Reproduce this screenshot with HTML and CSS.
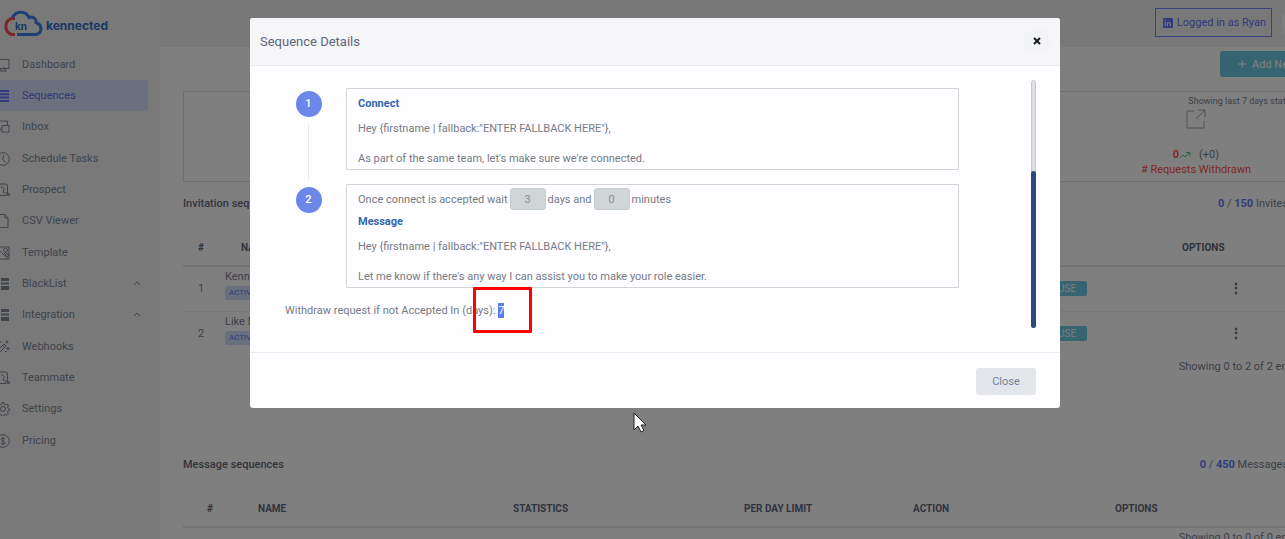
FILE: index.html
```html
<!DOCTYPE html>
<html lang="en">
<head>
    <meta charset="UTF-8">
    <meta name="viewport" content="width=device-width, initial-scale=1.0">
    <title>Kennected - Sequences</title>
    <link rel="stylesheet" href="styles.css">
</head>
<body>
    <div class="layout">
        <aside class="sidebar">
            <a href="#" class="logo">
                <svg class="logo-cloud" viewBox="0 0 42 28" fill="none" stroke-width="3">
                    <path d="M14 9.500H10.500A8.500 8.500 0 0 0 10.500 25.500H14" stroke="#ff4a50"/>
                    <path d="M11.500 9A9 9 0 0 1 28 8.500C32 7 35.500 10 35 13.500C42 16 41.500 25.500 34 25.500H16" stroke="#3a80e8"/>
                    <text x="14" y="21" class="logo-kn">kn</text>
                </svg>
                <span>kennected</span>
            </a>
            <nav>
                <ul class="menu">
                    <li><a href="#"><svg class="icon" viewBox="0 0 14 14"><path d="M1 1.500h12v9H1zM5 10.500v2.500M9 10.500v2.500M3 13h8M8 9v1.500"/></svg>Dashboard</a></li>
                    <li class="active"><a href="#"><svg class="icon" viewBox="0 0 14 14"><path d="M0 2h13M0 5.300h13M0 8.600h13M0 12h13" stroke-width="2"/></svg>Sequences</a></li>
                    <li><a href="#"><svg class="icon" viewBox="0 0 14 14"><path d="M11.500 5V1H1v8h4M6 5.500h7v6.500h-1v1l-1.500-1H6zM3 9v2l2-1.500"/></svg>Inbox</a></li>
                    <li><a href="#"><svg class="icon" viewBox="0 0 14 14"><circle cx="7" cy="7" r="6.300"/><path d="M8 3L6.500 7 9.500 10.500"/></svg>Schedule Tasks</a></li>
                    <li><a href="#"><svg class="icon" viewBox="0 0 14 14"><path d="M3 1h6.500a2 2 0 0 1 2 2v5.500L10 10M5 4a2.500 2.500 0 0 1 3 3l-1 2 3 2v1.500H1V11l3-2M11.500 8.500v4h2v-2h-2"/></svg>Prospect</a></li>
                    <li><a href="#"><svg class="icon" viewBox="0 0 14 14"><path d="M1.500 .5h7.500L12 4v9.500H1.500zM9 .5V4h3"/></svg>CSV Viewer</a></li>
                    <li><a href="#"><svg class="icon" viewBox="0 0 14 14"><path d="M1 1h12v12H1zM1 7l3-2 8 7.500M7 9l3-3"/><circle cx="9.500" cy="4" r="2"/><circle cx="11" cy="9" r="1.500"/></svg>Template</a></li>
                    <li><a href="#"><svg class="icon solid" viewBox="0 0 14 14"><path d="M0 1h4v3H0zM5 1h8v3H5zM0 5.500h4v2H0zM5 5.500h8v2H5zM0 9h4v4H0zM5 9h8v4H5z"/></svg>BlackList<svg class="chevron" viewBox="0 0 8 5"><path d="M1 4l3-3 3 3"/></svg></a></li>
                    <li><a href="#"><svg class="icon solid" viewBox="0 0 14 14"><path d="M0 1h4v3H0zM5 1h8v3H5zM0 5.500h4v2H0zM5 5.500h8v2H5zM0 9h4v4H0zM5 9h8v4H5z"/></svg>Integration<svg class="chevron" viewBox="0 0 8 5"><path d="M1 4l3-3 3 3"/></svg></a></li>
                    <li><a href="#"><svg class="icon" viewBox="0 0 14 14"><path d="M1 11l7-7 2 2-7 7zM6.500 5.500l2 2M11 .5v3M9.500 2h3M12 7v3M10.500 8.500h3M4 1v2M3 2h2M9 11.500h2"/></svg>Webhooks</a></li>
                    <li><a href="#"><svg class="icon" viewBox="0 0 14 14"><path d="M3 1h6.500a2 2 0 0 1 2 2v5.500L10 10M5 4a2.500 2.500 0 0 1 3 3l-1 2 3 2v1.500H1V11l3-2M11.500 8.500v4h2v-2h-2"/></svg>Teammate</a></li>
                    <li><a href="#"><svg class="icon" viewBox="0 0 14 14"><circle cx="7" cy="7" r="2.500"/><path d="M6 .7h2l.4 1.900 1.200.5 1.600-1 1.400 1.400-1 1.600.5 1.200 1.400.4v2l-1.500.4-.5 1.200 1 1.600-1.400 1.400-1.600-1-1.100.5-.4 1.500H6l-.4-1.500-1.200-.5-1.600 1-1.400-1.400 1-1.600-.5-1.200L.5 8.500v-2l1.500-.4.5-1.200-1-1.600 1.400-1.400 1.600 1 1.100-.5z"/></svg>Settings</a></li>
                    <li><a href="#"><svg class="icon" viewBox="0 0 14 14"><circle cx="7" cy="7" r="6.300"/><path d="M9.300 5C9 3.500 5 3.500 5 5.300S9.300 7 9.300 8.800 5 10.500 4.700 9M7 3v8"/></svg>Pricing</a></li>
                </ul>
            </nav>
        </aside>

        <main class="main">
            <header class="topbar">
                <button type="button" class="account">
                    <svg viewBox="0 0 10 10"><rect width="10" height="10" rx="1" fill="currentColor"/><path d="M2.200 4v4.200M4.400 8.200V4M4.400 6C4.400 4 7.500 4 7.500 6v2.200M2.200 1.800v1.100" fill="none" stroke="#f1f1f1" stroke-width="1.200"/></svg>
                    Logged in as Ryan
                </button>
                <span class="avatar"></span>
            </header>

            <div class="content">
                <div class="actions">
                    <button type="button" class="add-btn">
                        <svg viewBox="0 0 8 8"><path d="M4 0v8M0 4h8" stroke="currentColor" stroke-width="1.200"/></svg>
                        Add New
                    </button>
                </div>

                <section class="stats">
                    <p class="stats-note">Showing last 7 days statistics</p>
                    <div class="stat">
                        <svg class="export" viewBox="0 0 20 20"><path d="M8 2H1v17h17v-7M12 1h7v7M19 1l-9 9"/></svg>
                        <div class="stat-value"><b>0</b><svg class="trend" viewBox="0 0 12 8"><path d="M1 7l3-3 2 2 4-4M7 1.500h4v4"/></svg><span>(+0)</span></div>
                        <div class="stat-label"># Requests Withdrawn</div>
                    </div>
                </section>

                <section class="invitations">
                    <div class="title-row">
                        <h2>Invitation sequences</h2>
                        <p><b>0</b> / <b>150</b> Invites sent</p>
                    </div>
                    <table class="invite-table">
                        <thead>
                            <tr><th class="num">#</th><th class="name">NAME</th><th></th><th class="action"></th><th class="options">OPTIONS</th></tr>
                        </thead>
                        <tbody>
                            <tr>
                                <td class="num">1</td>
                                <td class="name">Kennected<span class="badge">ACTIVE</span></td>
                                <td></td>
                                <td class="action"><button type="button" class="pause">PAUSE</button></td>
                                <td class="options"><button type="button" class="dots" aria-label="Options">&#8942;</button></td>
                            </tr>
                            <tr>
                                <td class="num">2</td>
                                <td class="name">Like Minded<span class="badge">ACTIVE</span></td>
                                <td></td>
                                <td class="action"><button type="button" class="pause">PAUSE</button></td>
                                <td class="options"><button type="button" class="dots" aria-label="Options">&#8942;</button></td>
                            </tr>
                        </tbody>
                    </table>
                    <p class="entries">Showing 0 to 2 of 2 entries</p>
                </section>

                <section class="messages">
                    <div class="title-row">
                        <h2>Message sequences</h2>
                        <p><b>0</b> / <b>450</b> Messages sent</p>
                    </div>
                    <table class="message-table">
                        <thead>
                            <tr><th class="num">#</th><th class="c-name">NAME</th><th class="c-stats">STATISTICS</th><th class="c-limit">PER DAY LIMIT</th><th class="c-action">ACTION</th><th>OPTIONS</th></tr>
                        </thead>
                    </table>
                    <p class="entries">Showing 0 to 0 of 0 entries</p>
                </section>
            </div>
        </main>
    </div>

    <div class="backdrop">
        <div class="modal" role="dialog" aria-labelledby="modal-title">
            <div class="modal-header">
                <h1 id="modal-title">Sequence Details</h1>
                <button type="button" class="close-x" aria-label="Close dialog">
                    <svg viewBox="0 0 8 8"><path d="M1 1l6 6M7 1L1 7"/></svg>
                </button>
            </div>
            <div class="modal-body">
                <div class="scroll-area">
                    <div class="step">
                        <div class="step-side"><span class="step-num">1</span><span class="step-line"></span></div>
                        <div class="card">
                            <h3>Connect</h3>
                            <p>Hey {firstname | fallback:"ENTER FALLBACK HERE"},<br><br>As part of the same team, let's make sure we're connected.</p>
                        </div>
                    </div>
                    <div class="step">
                        <div class="step-side"><span class="step-num">2</span></div>
                        <div class="card card-wait">
                            <div class="wait">
                                <label for="days">Once connect is accepted wait</label>
                                <input type="text" id="days" value="3" disabled>
                                <label for="minutes">days and</label>
                                <input type="text" id="minutes" value="0" disabled>
                                <span>minutes</span>
                            </div>
                            <h3>Message</h3>
                            <p>Hey {firstname | fallback:"ENTER FALLBACK HERE"},<br><br>Let me know if there's any way I can assist you to make your role easier.</p>
                        </div>
                    </div>
                    <p class="withdraw">Withdraw request if not Accepted In (days): <span class="selected">7<span class="marker"></span></span></p>
                </div>
                <div class="scrollbar"><div class="thumb"></div></div>
            </div>
            <div class="modal-footer">
                <button type="button" class="close-btn">Close</button>
            </div>
        </div>
    </div>

    <svg class="cursor" viewBox="0 0 14 22"><path d="M1 1v17l4-4 3 6 3-1.500-3-5.500h5z"/></svg>
</body>
</html>
```
FILE: styles.css
```css
*{
    margin:0;
    padding:0;
    box-sizing:border-box;
}
body{
    font-family:Roboto, "Liberation Sans", sans-serif;
    font-size:11px;
    line-height:15px;
    color:#7c8290;
    background-color:#fff;
    height:100vh;
    overflow:hidden;
}
button, input{
    font-family:inherit;
    font-size:11px;
}
a{
    color:inherit;
    text-decoration:none;
}
svg{
    display:block;
    flex:none;
}
.layout{
    display:flex;
    min-height:100vh;
    margin-left:-12px;
    margin-right:-27px;
}

/* sidebar */
.sidebar{
    flex:none;
    width:172px;
    padding:9px 12px 0 0;
    background-color:#f2f2f2;
}
.logo{
    display:flex;
    align-items:center;
    gap:3px;
    padding-left:13px;
    margin-bottom:12px;
    color:#3070cc;
    font-family:Inter, Roboto, sans-serif;
    font-size:12px;
    font-weight:700;
}
.logo span{
    padding-top:4px;
}
.logo-cloud{
    width:42px;
    height:28px;
}
.logo-kn{
    font-size:10px;
    font-weight:700;
    fill:#3070cc;
    stroke:none;
}
.menu{
    list-style:none;
}
.menu a{
    display:flex;
    align-items:center;
    height:31px;
    padding-left:8px;
    color:#80889a;
}
.menu li:nth-child(3n){
    margin-bottom:1px;
}
.menu .active a{
    background-color:#d8defa;
    color:#6470f4;
    border-radius:0 3px 3px 0;
}
.icon{
    width:14px;
    height:14px;
    margin-right:12px;
    fill:none;
    stroke:currentColor;
    stroke-width:1;
}
.icon.solid{
    fill:currentColor;
    stroke:none;
}
.chevron{
    width:8px;
    height:5px;
    margin-left:auto;
    margin-right:7px;
    fill:none;
    stroke:currentColor;
    stroke-width:1;
}

/* page */
.main{
    flex:1;
    min-width:0;
}
.topbar{
    display:flex;
    justify-content:flex-end;
    gap:9px;
    height:47px;
    padding:8px 0 0;
    background-color:#f1f1f1;
}
.account{
    display:flex;
    align-items:center;
    gap:4px;
    height:29px;
    padding:0 5px 0 7px;
    border:1px solid #7084ff;
    background-color:transparent;
    color:#6474ff;
}
.account svg{
    width:10px;
    height:10px;
}
.avatar{
    width:31px;
    height:31px;
    border-radius:50%;
    background-color:#fff;
}
.content{
    padding:4px 0 0 23px;
}
.actions{
    display:flex;
    justify-content:flex-end;
    margin-bottom:14px;
}
.add-btn{
    display:flex;
    align-items:center;
    gap:6px;
    width:92px;
    height:26px;
    padding-left:18px;
    border:none;
    border-radius:3px;
    background-color:#6cc8e0;
    color:#fff;
}
.add-btn svg{
    width:8px;
    height:8px;
}
.stats{
    display:flex;
    flex-direction:column;
    align-items:flex-end;
    border:1px solid #dcdcdc;
    padding:2px 4px 4px;
    margin-bottom:14px;
}
.stats-note{
    font-size:9px;
}
.stat{
    display:flex;
    flex-direction:column;
    align-items:center;
    margin-right:56px;
}
.export{
    width:20px;
    height:20px;
    margin-bottom:18px;
    fill:none;
    stroke:#a4a4a4;
    stroke-width:1;
}
.stat-value{
    display:flex;
    align-items:center;
}
.stat-value b,
.stat-label{
    color:#ff5148;
}
.stat-value span{
    margin-left:8px;
}
.trend{
    width:12px;
    height:8px;
    fill:none;
    stroke:#4cc47a;
    stroke-width:1;
}
.title-row{
    display:flex;
    justify-content:space-between;
}
.title-row h2{
    font-size:11px;
    font-weight:500;
    color:#646978;
}
.title-row b{
    color:#6478ff;
}
table{
    width:100%;
    border-collapse:collapse;
    table-layout:fixed;
}
th{
    height:37px;
    border-bottom:2px solid #e6e6ea;
    text-align:left;
    font-size:10px;
    font-weight:700;
    color:#60677c;
}
.invite-table{
    margin-top:18px;
}
.invite-table .num{
    width:36px;
    text-align:center;
}
.invite-table td{
    height:45px;
    border-bottom:1px solid #f0f0f4;
}
.invite-table tr:last-child td{
    border-bottom:none;
}
.invite-table th.name{
    width:140px;
    padding-left:22px;
}
.invite-table td.name{
    padding-left:6px;
    padding-bottom:8px;
}
.invite-table .action{
    width:172px;
    padding-left:35px;
}
.invite-table .options{
    width:140px;
}
.invite-table th.options{
    padding-left:10px;
}
.invite-table td.options{
    padding-right:12px;
    text-align:center;
}
.badge{
    display:block;
    width:40px;
    margin-top:2px;
    line-height:14px;
    padding-left:4px;
    border-radius:2px;
    background-color:#d3defa;
    font-size:8px;
    color:#6078ff;
}
.pause{
    padding:0 11px;
    height:15px;
    border:none;
    border-radius:2px;
    background-color:#6cc8e0;
    font-size:10px;
    color:#f0fafc;
}
.dots{
    width:16px;
    border:none;
    background:none;
    font-size:14px;
    font-weight:700;
    color:#666;
}
.entries{
    padding-right:3px;
    text-align:right;
}
.invitations .entries{
    margin-top:3px;
}
.messages{
    margin-top:83px;
}
.message-table{
    margin-top:18px;
    margin-bottom:2px;
}
.message-table th{
    padding-left:21px;
}
.message-table .num{
    width:54px;
    padding-left:0;
    text-align:center;
}
.c-name{
    width:255px;
}
.c-stats{
    width:231px;
}
.c-limit{
    width:169px;
}
.c-action{
    width:202px;
}

/* modal */
.backdrop{
    position:fixed;
    top:0;
    bottom:0;
    left:0;
    right:-25px;
    display:flex;
    justify-content:center;
    align-items:flex-start;
    padding-top:18px;
    background-color:rgba(0,0,0,0.5);
}
.modal{
    width:100%;
    max-width:810px;
    border-radius:3px;
    background-color:#fefdff;
    color:#74788d;
    overflow:hidden;
}
.modal-header{
    display:flex;
    justify-content:space-between;
    align-items:center;
    padding:10px 10px 11px;
    border-bottom:1px solid #ebedf2;
    background-color:#f6f5f8;
}
.modal-header h1{
    font-size:13px;
    font-weight:400;
    color:#5d6680;
}
.close-x{
    display:flex;
    align-items:center;
    justify-content:center;
    width:26px;
    height:26px;
    border:none;
    border-radius:50%;
    background-color:#f2f4f5;
}
.close-x svg{
    width:8px;
    height:8px;
    stroke:#1b1b22;
    stroke-width:2;
}
.modal-body{
    display:flex;
    padding:14px 24px 24px 35px;
}
.scroll-area{
    flex:1;
    padding:8px 72px 10px 0;
    color:#767b85;
}
.scrollbar{
    width:5px;
    border-radius:3px;
    background-color:#dfdfe1;
    border:1px solid #c8c8ca;
    display:flex;
    flex-direction:column;
    justify-content:flex-end;
}
.thumb{
    height:64%;
    margin:0 -1px -1px;
    border-radius:3px;
    background-color:#2b4a7c;
}
.step{
    display:flex;
    margin-bottom:14px;
}
.step-side{
    display:flex;
    flex-direction:column;
    align-items:center;
    width:47px;
    margin-right:14px;
    padding-top:3px;
}
.step-num{
    width:26px;
    line-height:26px;
    border-radius:50%;
    background-color:#6c86ea;
    color:#fff;
    text-align:center;
    font-weight:500;
}
.step-line{
    flex:1;
    width:1px;
    margin-top:7px;
    margin-bottom:-10px;
    background-color:#ececf0;
}
.card{
    flex:1;
    padding:7px 11px 3px;
    border:1px solid #d2d4d8;
    border-radius:1px;
}
.card h3{
    margin-bottom:10px;
    font-size:11px;
    font-weight:700;
    color:#2f67ae;
}
.card-wait{
    padding-top:3px;
}
.wait{
    display:flex;
    align-items:center;
    gap:2px;
    margin-bottom:4px;
}
.wait input{
    width:36px;
    height:22px;
    border:1px solid #c6cbcf;
    border-radius:3px;
    background-color:#d0d5d8;
    color:#868d94;
    text-align:center;
}
.withdraw{
    padding-top:1px;
}
.selected{
    position:relative;
    display:inline-block;
    background-color:#5b7cf0;
    color:#fff;
}
/* red frame round the selected value */
.marker{
    position:absolute;
    top:-16px;
    left:-25px;
    width:59px;
    height:46px;
    border:3px solid #fe0000;
    border-radius:1px;
}
.modal-footer{
    display:flex;
    justify-content:flex-end;
    padding:15px 24px 13px;
    border-top:1px solid #ebedf2;
}
.close-btn{
    width:60px;
    height:27px;
    border:none;
    border-radius:3px;
    background-color:#e3e7ec;
    color:#74809a;
}
.cursor{
    position:fixed;
    left:633px;
    top:412px;
    width:14px;
    height:22px;
    fill:#fff;
    stroke:#222;
    stroke-width:1;
}
```
